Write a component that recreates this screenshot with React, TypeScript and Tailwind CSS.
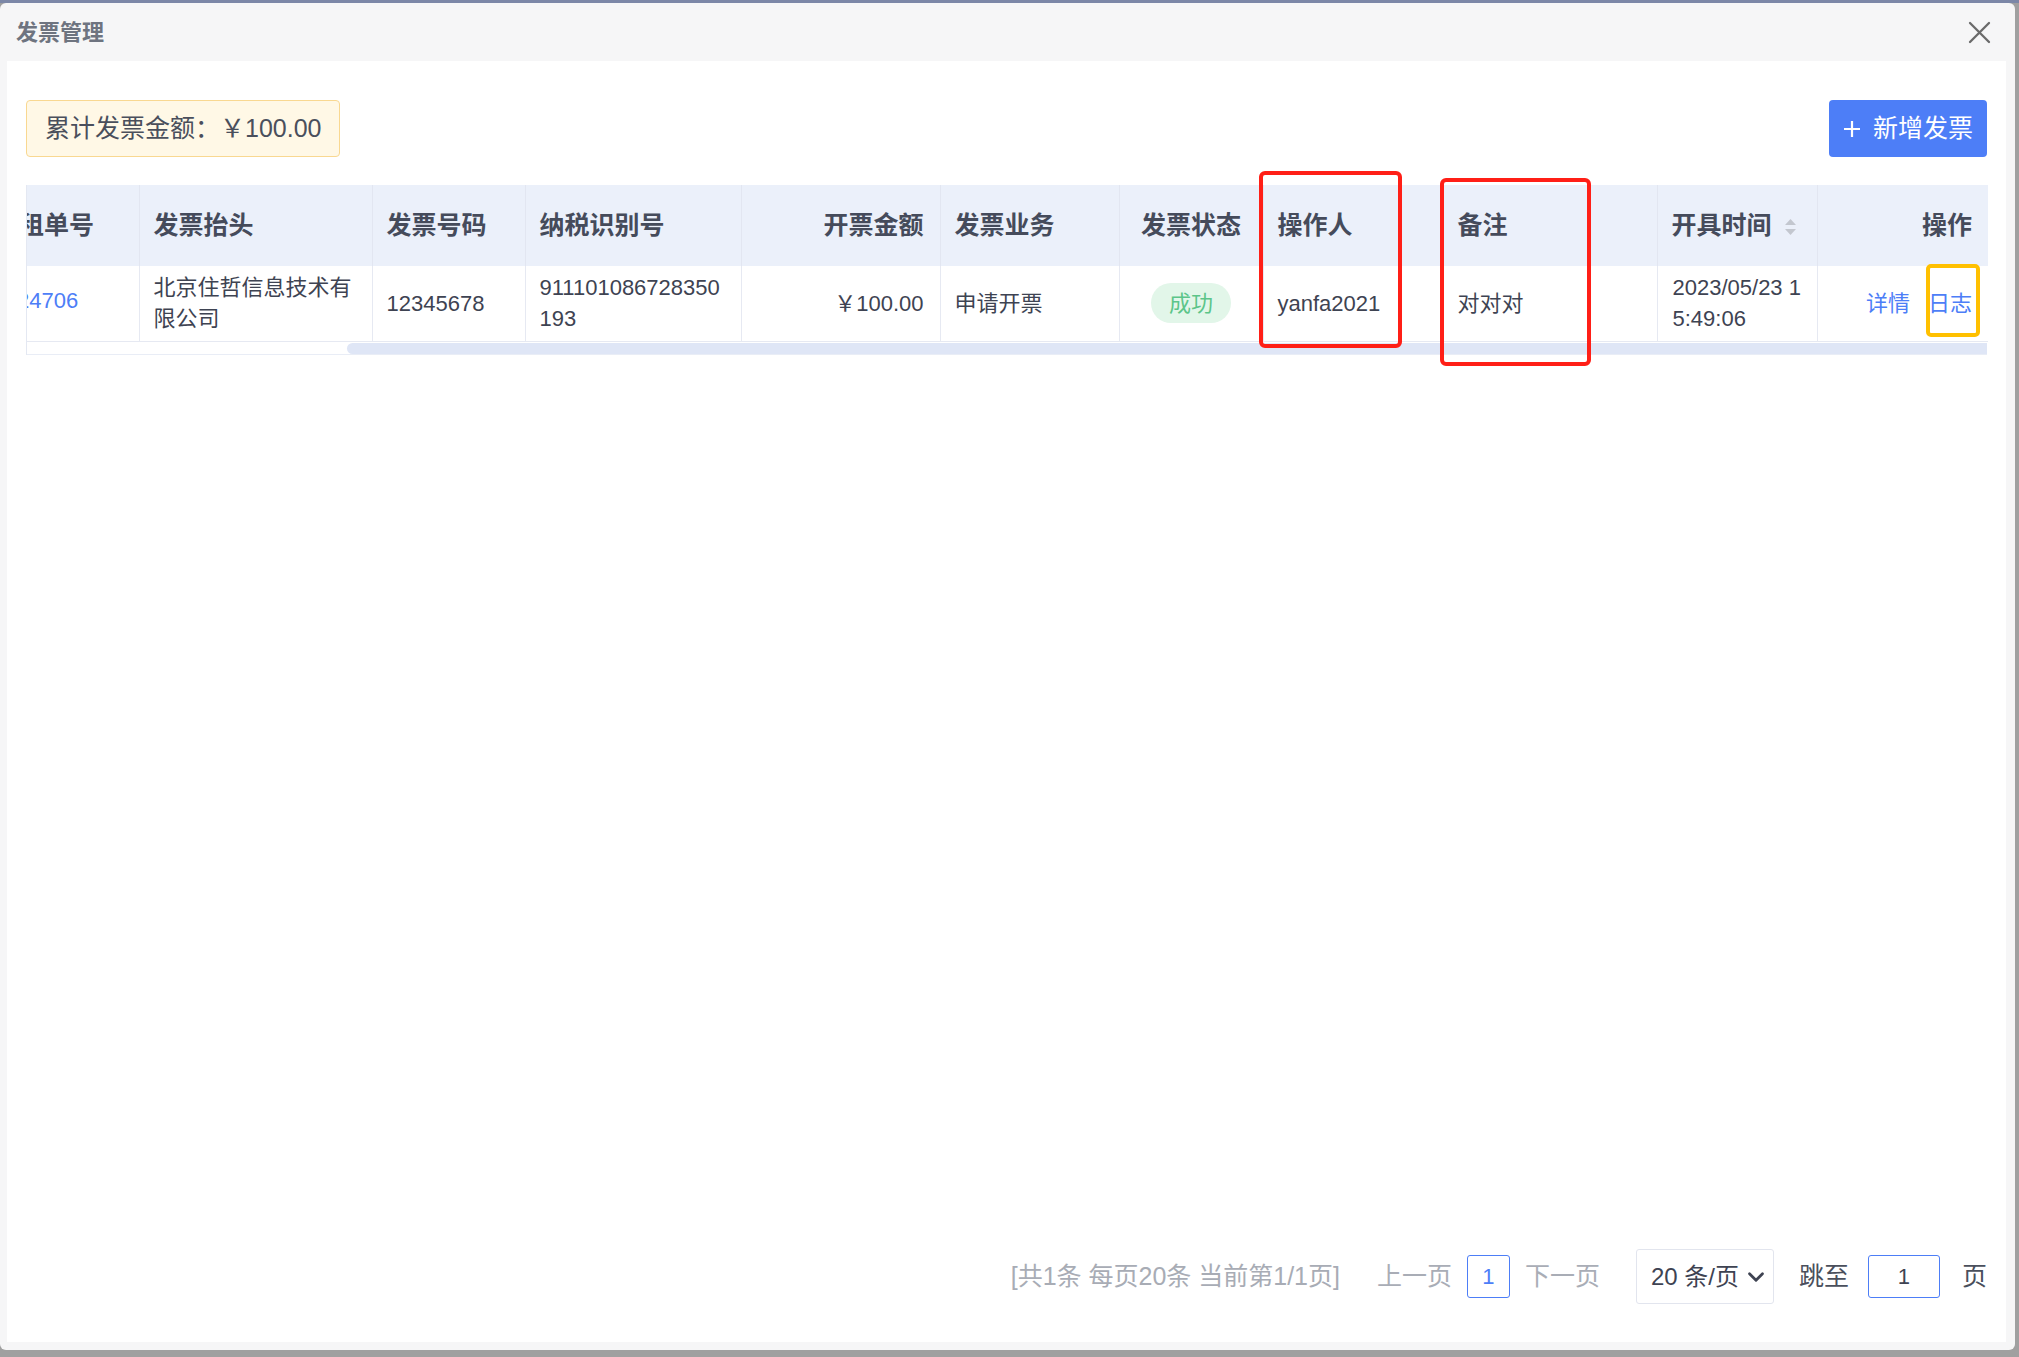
import { ChevronDown } from 'lucide-react';

// Invoice management modal: summary, one-row invoice table, pager.
const headCell =
  'h-[81px] border-r border-[#e2e6f1] bg-[#ebf0fa] px-[14px] text-[25px] font-bold text-[#454b5b]';
const bodyCell =
  'h-[75px] border-r border-b border-[#e6e9f2] px-[14px] text-[22px] leading-[31px] text-[#3e4352] break-all';

function SortIcon() {
  return (
    <svg width="13" height="20" viewBox="0 0 13 20" className="ml-[12px] inline-block align-middle">
      <path d="M6.5 2 L12 8 L1 8 Z" fill="#c3c7cf" />
      <path d="M1 12 L12 12 L6.5 18 Z" fill="#c3c7cf" />
    </svg>
  );
}

export default function App() {
  return (
    <div className="relative h-[1357px] w-[2019px] overflow-hidden bg-[#a0a0a0] font-['Liberation_Sans','Noto_Sans_CJK_SC',sans-serif]">
      <div className="h-[3px] bg-[#7c87a7]" />

      <div className="flex h-[1347px] w-[2015px] flex-col rounded-[6px] bg-[#f6f6f7]">
        {/* Title bar */}
        <header className="flex h-[58px] items-center justify-between pl-[16px] pr-[24px]">
          <h1 className="text-[22px] font-bold text-[#6e7480]">发票管理</h1>
          <svg width="23" height="23" viewBox="0 0 23 23">
            <path d="M2 2 L21 21 M21 2 L2 21" stroke="#6a6a6a" strokeWidth="2.3" strokeLinecap="round" />
          </svg>
        </header>

        <div className="mb-[8px] ml-[7px] mr-[9px] flex flex-1 flex-col bg-white px-[19px] pt-[39px] pb-[38px]">
          {/* Summary + create */}
          <div className="flex h-[57px] items-stretch justify-between">
            <div className="flex items-center rounded-[4px] border border-[#f9d891] bg-[#fff8e6] px-[18px] text-[25px] text-[#4a4f5c]">
              累计发票金额：￥100.00
            </div>
            <button className="flex w-[158px] items-center justify-center gap-[12px] rounded-[4px] bg-[#4d7ef7] text-[25px] text-white">
              <svg width="18" height="18" viewBox="0 0 18 18">
                <path d="M9 1 V17 M1 9 H17" stroke="white" strokeWidth="2.2" />
              </svg>
              新增发票
            </button>
          </div>

          {/* Table (scrolled a little to the right) */}
          <div className="mt-[28px] border-l border-[#e4e8f2]">
            <table className="w-[1961px] table-fixed border-collapse">
              <colgroup>
                <col className="w-[112px]" />
                <col className="w-[233px]" />
                <col className="w-[153px]" />
                <col className="w-[216px]" />
                <col className="w-[199px]" />
                <col className="w-[179px]" />
                <col className="w-[144px]" />
                <col className="w-[180px]" />
                <col className="w-[214px]" />
                <col className="w-[160px]" />
                <col className="w-[171px]" />
              </colgroup>
              <thead>
                <tr>
                  <th className={`${headCell} overflow-hidden pl-0 text-left`}>
                    <span className="ml-[-8px] inline-block whitespace-nowrap">租单号</span>
                  </th>
                  <th className={`${headCell} text-left`}>发票抬头</th>
                  <th className={`${headCell} text-left`}>发票号码</th>
                  <th className={`${headCell} text-left`}>纳税识别号</th>
                  <th className={`${headCell} pr-[16px] text-right`}>开票金额</th>
                  <th className={`${headCell} text-left`}>发票业务</th>
                  <th className={`${headCell} text-center`}>发票状态</th>
                  <th className={`${headCell} text-left`}>操作人</th>
                  <th className={`${headCell} text-left`}>备注</th>
                  <th className={`${headCell} text-left whitespace-nowrap`}>
                    开具时间
                    <SortIcon />
                  </th>
                  <th className="h-[81px] bg-[#ebf0fa] px-[16px] text-right text-[25px] font-bold text-[#454b5b]">
                    操作
                  </th>
                </tr>
              </thead>
              <tbody>
                <tr>
                  <td className={`${bodyCell} overflow-hidden pl-0 pb-[6px]`}>
                    <span className="ml-[-10px] inline-block whitespace-nowrap text-[#4d7ef7]">24706</span>
                  </td>
                  <td className={bodyCell}>北京住哲信息技术有限公司</td>
                  <td className={bodyCell}>12345678</td>
                  <td className={bodyCell}>911101086728350193</td>
                  <td className={`${bodyCell} pr-[16px] text-right`}>￥100.00</td>
                  <td className={bodyCell}>申请开票</td>
                  <td className={`${bodyCell} text-center`}>
                    <span className="inline-flex h-[40px] items-center rounded-full bg-[#e2f6e9] px-[18px] text-[#5cc589]">
                      成功
                    </span>
                  </td>
                  <td className={bodyCell}>yanfa2021</td>
                  <td className={bodyCell}>对对对</td>
                  <td className={`${bodyCell} pl-[15px]`}>2023/05/23 15:49:06</td>
                  <td className="h-[75px] border-b border-[#e6e9f2] pr-[16px] text-right text-[22px] text-[#4d7ef7]">
                    <span className="mr-[18px]">详情</span>
                    <span>日志</span>
                  </td>
                </tr>
              </tbody>
            </table>
            {/* horizontal scrollbar */}
            <div className="h-[13px] border-b border-[#e9edf6] pt-[1px]">
              <div className="ml-[320px] h-[11px] rounded-l-full bg-[#dfe6f6]" />
            </div>
          </div>

          {/* Pager */}
          <div className="mt-auto flex h-[55px] items-center justify-end text-[25px]">
            <span className="text-[#a8acb5]">[共1条 每页20条 当前第1/1页]</span>
            <span className="ml-[37px] text-[#a9adb6]">上一页</span>
            <span className="ml-[15px] flex h-[43px] w-[43px] items-center justify-center rounded-[3px] border border-[#4d7ef7] text-[22px] text-[#4d7ef7]">
              1
            </span>
            <span className="ml-[15px] text-[#a9adb6]">下一页</span>
            <div className="ml-[36px] flex h-[55px] w-[138px] items-center gap-[4px] rounded-[3px] border border-[#e2e5ee] pl-[14px] text-[24px] text-[#3e4352]">
              20 条/页
              <ChevronDown size={26} strokeWidth={2.6} className="text-[#3e4352]" />
            </div>
            <span className="ml-[25px] text-[#4a4f5c]">跳至</span>
            <span className="ml-[19px] flex h-[43px] w-[72px] items-center justify-center rounded-[3px] border border-[#4d7ef7] text-[22px] text-[#3e4352]">
              1
            </span>
            <span className="ml-[22px] text-[#4a4f5c]">页</span>
          </div>
        </div>
      </div>

      {/* Annotation boxes drawn over the screenshot */}
      <div className="absolute left-[1259px] top-[171px] h-[177px] w-[143px] rounded-[6px] border-[4px] border-[#ff1f17]" />
      <div className="absolute left-[1440px] top-[178px] h-[188px] w-[151px] rounded-[6px] border-[4px] border-[#ff1f17]" />
      <div className="absolute left-[1926px] top-[264px] h-[73px] w-[54px] rounded-[5px] border-[4px] border-[#ffc000]" />
    </div>
  );
}
